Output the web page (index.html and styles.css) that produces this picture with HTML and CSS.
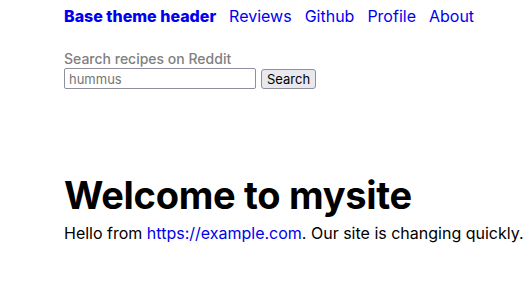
FILE: index.html
```html
<html>

<head>
    <link rel="stylesheet" href="styles.css">
</head>

<body>

    <div class="sivu">
        <ul class="menu">
            <li><a class="brand" href="#"><strong>Base theme header</strong></a></li>
            <li><a href="#">Reviews</a></li>
            <li><a href="#">Github</a></li>
            <li><a href="#">Profile</a></li>
            <li><a href="#">About</a></li>
        </ul>

        <form class="haku">
            <label for="q">Search recipes on Reddit</label>
            <div class="rivi">
                <input type="text" id="q" name="q" placeholder="hummus">
                <input type="submit" value="Search">
            </div>
        </form>

        <h1 class="otsikko">Welcome to mysite</h1>
        <p class="teksti">Hello from <a href="#">https://example.com</a>. Our site is changing quickly.</p>
    </div>

</body>

</html>
```

FILE: styles.css
```css
body {
    margin: 0;
    font-family: Inter, "Noto Sans", sans-serif;
    background-color: white;
}

.sivu {
    padding: 0 0 0 64px;
}

ul.menu {
    list-style-type: none;
    margin: 0;
    padding: 6px 0 0 0;
    display: flex;
    gap: 13px;
}

ul.menu li a {
    color: #0000ee;
    text-decoration: none;
    font-size: 16px;
}

ul.menu li a.brand strong {
    font-weight: 800;
}

.haku {
    margin-top: 24px;
    display: flex;
    flex-direction: column;
}

.haku label {
    color: #808080;
    font-size: 14px;
    font-weight: 500;
    line-height: 17px;
}

.rivi {
    display: flex;
    align-items: center;
    gap: 5px;
    margin-top: 1px;
}

input[type=text] {
    width: 192px;
    height: 21px;
    box-sizing: border-box;
    border: 1px solid #8f8f9d;
    border-radius: 2px;
    padding: 1px 4px;
    font-family: Inter, "Noto Sans", sans-serif;
    font-size: 13px;
}

input[type=submit] {
    height: 20px;
    padding: 0 5px;
    border: 1px solid #8f8f9d;
    border-radius: 3px;
    background-color: #e9e9ed;
    font-family: Inter, "Noto Sans", sans-serif;
    font-size: 13px;
    color: black;
}

h1.otsikko {
    margin: 83px 0 0 0;
    font-size: 38px;
    font-weight: 700;
    letter-spacing: -0.3px;
    color: black;
}

p.teksti {
    margin: 5px 0 0 0;
    font-size: 16px;
    color: black;
    white-space: nowrap;
}

p.teksti a {
    color: #0000ee;
    text-decoration: none;
}
```
